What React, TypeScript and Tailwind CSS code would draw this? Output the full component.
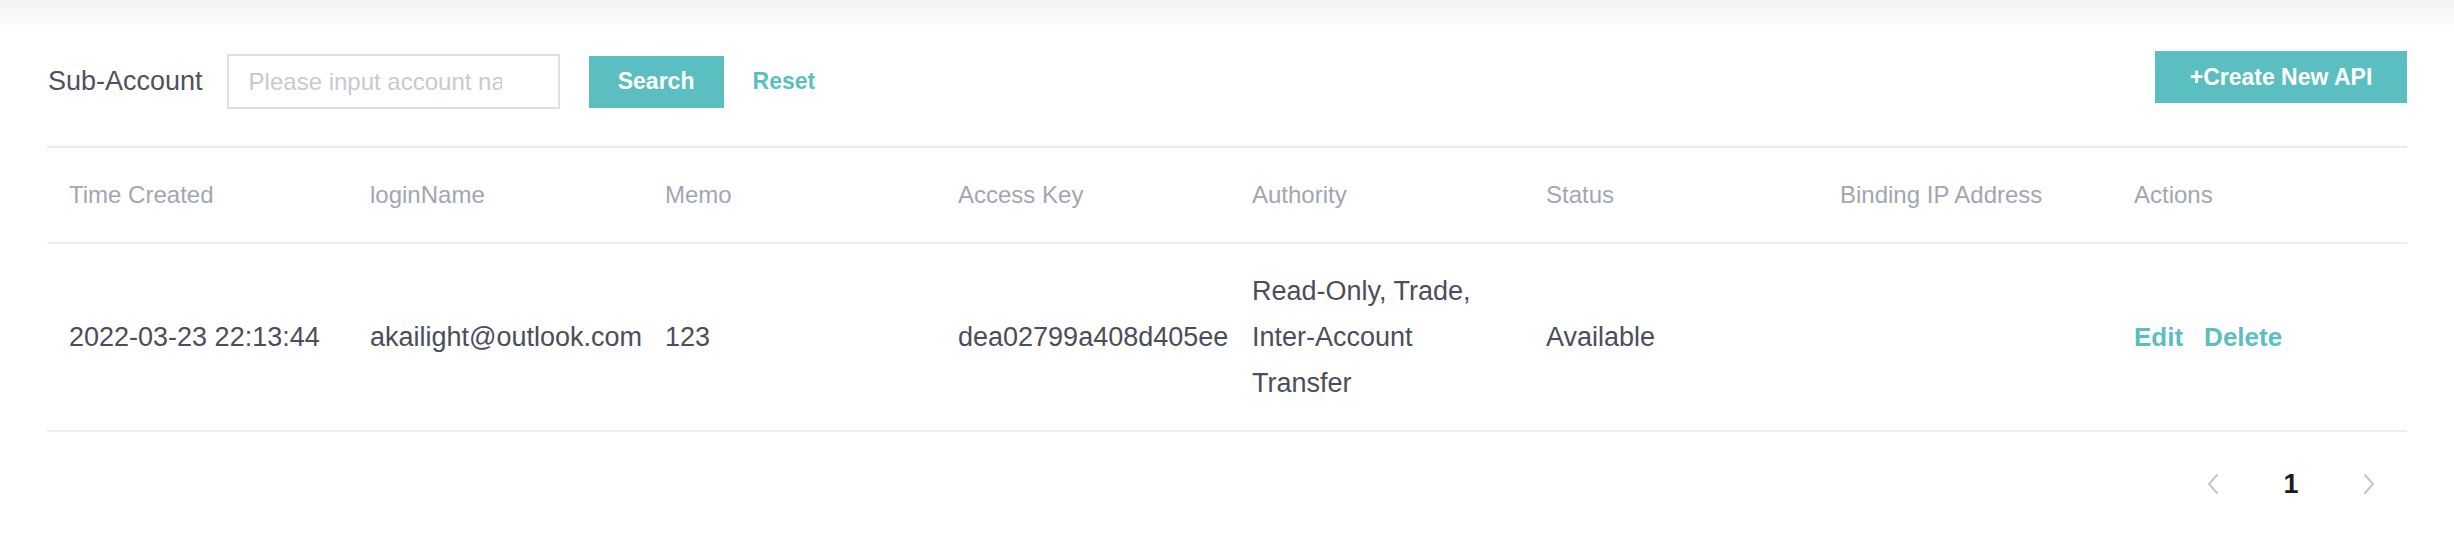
import React from "react";

const COLS = "grid grid-cols-[301px_295px_293px_294px_294px_294px_294px_1fr]";

const HEADERS = [
  "Time Created",
  "loginName",
  "Memo",
  "Access Key",
  "Authority",
  "Status",
  "Binding IP Address",
  "Actions",
];

function Chevron({ dir }: { dir: "left" | "right" }) {
  return (
    <svg width="12" height="22" viewBox="0 0 12 22" fill="none">
      <path
        d={dir === "left" ? "M10 2 L2 11 L10 20" : "M2 2 L10 11 L2 20"}
        stroke="#c4c6cc"
        strokeWidth="2"
        strokeLinecap="round"
        strokeLinejoin="round"
      />
    </svg>
  );
}

export default function App() {
  return (
    <div className="min-h-[542px] w-full bg-white bg-[linear-gradient(to_bottom,#f3f3f5,#ffffff_34px)] px-[47px] font-['Liberation_Sans',Arial,sans-serif]">
      {/* toolbar */}
      <div className="flex h-[146px] items-start justify-between pt-[51px]">
        <div className="mt-[3px] flex items-center pl-[1px]">
          <span className="text-[27px] text-[#4f515d]">Sub-Account</span>
          <input
            className="ml-[24px] h-[55px] w-[333px] border-2 border-[#dfe0e5] pl-[20px] pr-[56px] text-[24px] text-[#4b4e5a] outline-none placeholder:text-[#c8cad0]"
            placeholder="Please input account name"
          />
          <button
            type="button"
            className="ml-[29px] h-[52px] w-[135px] bg-[#5bbfc1] text-[23px] font-bold text-white"
          >
            Search
          </button>
          <button type="button" className="ml-[29px] text-[23px] font-bold text-[#5bbfc1]">
            Reset
          </button>
        </div>
        <button
          type="button"
          className="h-[52px] w-[252px] bg-[#5bbfc1] text-[23px] font-bold text-white"
        >
          +Create New API
        </button>
      </div>

      {/* table */}
      <div className="border-t-2 border-[#e7eaf2]">
        <div className={`${COLS} h-[96px] items-center border-b-2 border-[#eceef2]`}>
          {HEADERS.map((h) => (
            <div key={h} className="overflow-hidden whitespace-nowrap px-[22px] text-[24px] text-[#a2a6b2]">
              {h}
            </div>
          ))}
        </div>
        <div className={`${COLS} items-center border-b-2 border-[#eceef2] py-[24px] text-[27px] leading-[46px] text-[#4b4e5a]`}>
          <div className="overflow-hidden whitespace-nowrap px-[22px]">2022-03-23 22:13:44</div>
          <div className="overflow-hidden whitespace-nowrap px-[22px]">akailight@outlook.com</div>
          <div className="overflow-hidden whitespace-nowrap px-[22px]">123</div>
          <div className="overflow-hidden whitespace-nowrap px-[22px]">dea02799a408d405ee1c3b6f0a2e9d47</div>
          <div className="px-[22px]">Read-Only, Trade, Inter-Account Transfer</div>
          <div className="overflow-hidden whitespace-nowrap px-[22px]">Available</div>
          <div className="px-[22px]" />
          <div className="flex gap-[21px] px-[22px] text-[26px] font-bold text-[#5bbfc1]">
            <button type="button">Edit</button>
            <button type="button">Delete</button>
          </div>
        </div>
      </div>

      {/* pagination */}
      <div className="mt-[20px] flex justify-end gap-[14px] pr-[6px]">
        <div className="flex h-[64px] w-[64px] items-center justify-center">
          <Chevron dir="left" />
        </div>
        <div className="flex h-[64px] w-[64px] items-center justify-center text-[27px] font-bold text-[#1b1c20]">
          1
        </div>
        <div className="flex h-[64px] w-[64px] items-center justify-center">
          <Chevron dir="right" />
        </div>
      </div>
    </div>
  );
}
